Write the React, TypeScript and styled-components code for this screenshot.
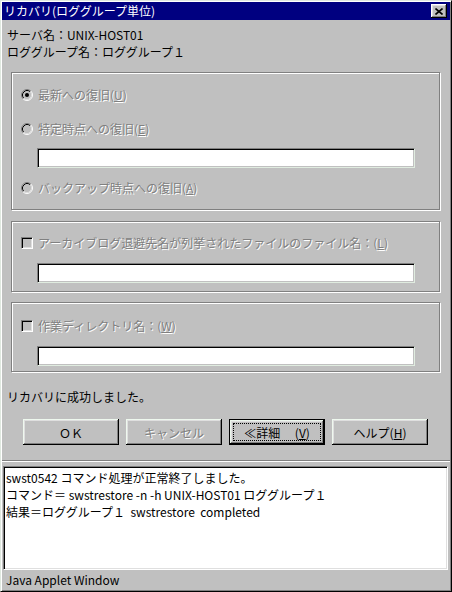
import React from 'react';
import styled, { createGlobalStyle } from 'styled-components';

const FONT = `"Noto Sans CJK JP", "Noto Sans", sans-serif`;

const Global = createGlobalStyle`
  html, body { margin: 0; padding: 0; background: #c0c0c0; }
  body { font-family: ${FONT}; font-size: 12px; color: #000; }
  * { box-sizing: border-box; }
`;

const Win = styled.div`
  width: 452px;
  height: 592px;
  background: #c0c0c0;
  border-style: solid;
  border-width: 1px;
  border-color: #dfe8df #000 #000 #dfe8df;
  box-shadow: inset 1px 1px 0 #fff, inset -1px -1px 0 #808080;
  padding: 1px;
  display: flex;
  flex-direction: column;
`;

const TitleBar = styled.div`
  height: 18px;
  flex: none;
  background: #000080;
  color: #fff;
  display: flex;
  align-items: center;
  justify-content: space-between;
  padding: 0 3px 0 2px;
  font-size: 12px;
  line-height: 18px;
`;

const CloseBtn = styled.div`
  width: 16px;
  height: 14px;
  background: #c0c0c0;
  box-shadow: inset -1px -1px 0 #000, inset 1px 1px 0 #fff, inset -2px -2px 0 #808080, inset 2px 2px 0 #dfdfdf;
  display: flex;
  align-items: center;
  justify-content: center;
`;

const Body = styled.div`
  flex: 1;
  display: flex;
  flex-direction: column;
  min-height: 0;
`;

const Info = styled.div`
  padding: 6px 0 0 5px;
  line-height: 17px;
  height: 52px;
  flex: none;
`;

const Group = styled.div<{ $pt: number; $pb: number; $gap: number; $mt: number }>`
  flex: none;
  margin: ${(p) => p.$mt}px 10px 0 9px;
  border: 1px solid #808080;
  box-shadow: inset 1px 1px 0 #fff, 1px 1px 0 #fff;
  padding: ${(p) => p.$pt}px 0 ${(p) => p.$pb}px 0;
  display: flex;
  flex-direction: column;
  gap: ${(p) => p.$gap}px;
`;

const OptionRow = styled.div<{ $mb?: number; $mt?: number }>`
  height: 14px;
  display: flex;
  align-items: center;
  padding-left: 9px;
  gap: 5px;
  margin-top: ${(p) => p.$mt ?? 0}px;
  margin-bottom: ${(p) => p.$mb ?? 0}px;
`;

const Disabled = styled.span`
  color: #808080;
  text-shadow: 1px 1px 0 #fff;
  white-space: nowrap;
  line-height: 14px;
`;

const CheckBox = styled.div`
  width: 12px;
  height: 12px;
  flex: none;
  background: #c0c0c0;
  border-style: solid;
  border-width: 1px;
  border-color: #808080 #fff #fff #808080;
  box-shadow: inset 1px 1px 0 #000, inset -1px -1px 0 #dfdfdf;
`;

const Field = styled.div`
  margin-left: 25px;
  width: 378px;
  height: 20px;
  flex: none;
  background: #fff;
  border-style: solid;
  border-width: 1px;
  border-color: #808080 #e0ece0 #e0ece0 #808080;
  box-shadow: inset 1px 1px 0 #000, inset -1px -1px 0 #c0c0c0;
`;

const Message = styled.div`
  flex: none;
  margin-top: 17px;
  padding-left: 5px;
  line-height: 16px;
  height: 16px;
`;

const ButtonRow = styled.div`
  flex: none;
  margin-top: 14px;
  padding-left: 21px;
  display: flex;
  gap: 7px;
`;

const Button = styled.div<{ $default?: boolean; $disabled?: boolean }>`
  width: 96px;
  height: 26px;
  background: #c0c0c0;
  display: flex;
  align-items: center;
  justify-content: center;
  position: relative;
  font-size: 12px;
  white-space: nowrap;
  color: ${(p) => (p.$disabled ? '#808080' : '#000')};
  text-shadow: ${(p) => (p.$disabled ? '1px 1px 0 #fff' : 'none')};
  border: ${(p) => (p.$default ? '1px solid #000' : 'none')};
  box-shadow: inset -1px -1px 0 #000, inset 1px 1px 0 #eef8ee, inset -2px -2px 0 #808080,
    inset 2px 2px 0 #dfdfdf;
`;

const FocusRing = styled.div`
  position: absolute;
  inset: 3px;
  border: 1px dotted #000;
  pointer-events: none;
`;

const Separator = styled.div`
  flex: none;
  margin-top: 15px;
  height: 2px;
  border-top: 1px solid #808080;
  border-bottom: 1px solid #fff;
`;

const Output = styled.div`
  flex: none;
  margin: 4px 2px 0 1px;
  height: 104px;
  background: #fff;
  border-style: solid;
  border-width: 1px;
  border-color: #808080 #fff #fff #808080;
  box-shadow: inset 1px 1px 0 #000, inset -1px -1px 0 #dfdfdf;
  padding: 2px 0 0 2px;
  line-height: 17px;
  white-space: pre;
`;

const StatusBar = styled.div`
  flex: 1;
  padding-left: 4px;
  display: flex;
  align-items: center;
  line-height: 20px;
`;

const Radio: React.FC<{ checked?: boolean }> = ({ checked }) => (
  <svg width="12" height="12" viewBox="0 0 12 12" style={{ flex: 'none' }}>
    <circle cx="6" cy="6" r="5" fill="#c0c0c0" />
    <path d="M2.11 9.89 A5.5 5.5 0 0 1 9.89 2.11" stroke="#808080" fill="none" />
    <path d="M2.82 9.18 A4.5 4.5 0 0 1 9.18 2.82" stroke="#000" fill="none" />
    <path d="M9.89 2.11 A5.5 5.5 0 0 1 2.11 9.89" stroke="#fff" fill="none" />
    <path d="M9.18 2.82 A4.5 4.5 0 0 1 2.82 9.18" stroke="#dfdfdf" fill="none" />
    {checked && <circle cx="6" cy="6" r="2" fill="#000" />}
  </svg>
);

export default function App() {
  return (
    <>
      <Global />
      <Win>
        <TitleBar>
          <span>リカバリ(ロググループ単位)</span>
          <CloseBtn>
            <svg width="8" height="7" viewBox="0 0 8 7">
              <path d="M0.5 0.5 L7.5 6.5 M7.5 0.5 L0.5 6.5" stroke="#000" strokeWidth="1.6" />
            </svg>
          </CloseBtn>
        </TitleBar>
        <Body>
          <Info>
            <div>サーバ名：UNIX-HOST01</div>
            <div>ロググループ名：ロググループ１</div>
          </Info>

          <Group $mt={0} $pt={15} $pb={14} $gap={0}>
            <OptionRow $mb={20}>
              <Radio checked />
              <Disabled>
                最新への復旧(<u>U</u>)
              </Disabled>
            </OptionRow>
            <OptionRow $mb={12}>
              <Radio />
              <Disabled>
                特定時点への復旧(<u>E</u>)
              </Disabled>
            </OptionRow>
            <Field />
            <OptionRow $mt={13}>
              <Radio />
              <Disabled>
                バックアップ時点への復旧(<u>A</u>)
              </Disabled>
            </OptionRow>
          </Group>

          <Group $mt={11} $pt={14} $pb={8} $gap={13}>
            <OptionRow>
              <CheckBox />
              <Disabled>
                アーカイブログ退避先名が列挙されたファイルのファイル名：(<u>L</u>)
              </Disabled>
            </OptionRow>
            <Field />
          </Group>

          <Group $mt={10} $pt={16} $pb={5} $gap={13}>
            <OptionRow>
              <CheckBox />
              <Disabled>
                作業ディレクトリ名：(<u>W</u>)
              </Disabled>
            </OptionRow>
            <Field />
          </Group>

          <Message>リカバリに成功しました。</Message>

          <ButtonRow>
            <Button>ＯＫ</Button>
            <Button $disabled>キャンセル</Button>
            <Button $default>
              ≪詳細　 (<u>V</u>)
              <FocusRing />
            </Button>
            <Button>
              ヘルプ(<u>H</u>)
            </Button>
          </ButtonRow>

          <Separator />

          <Output>
            <div>swst0542 コマンド処理が正常終了しました。</div>
            <div>コマンド＝ swstrestore -n -h UNIX-HOST01 ロググループ１</div>
            <div>結果＝ロググループ１  swstrestore  completed</div>
          </Output>

          <StatusBar>Java Applet Window</StatusBar>
        </Body>
      </Win>
    </>
  );
}
